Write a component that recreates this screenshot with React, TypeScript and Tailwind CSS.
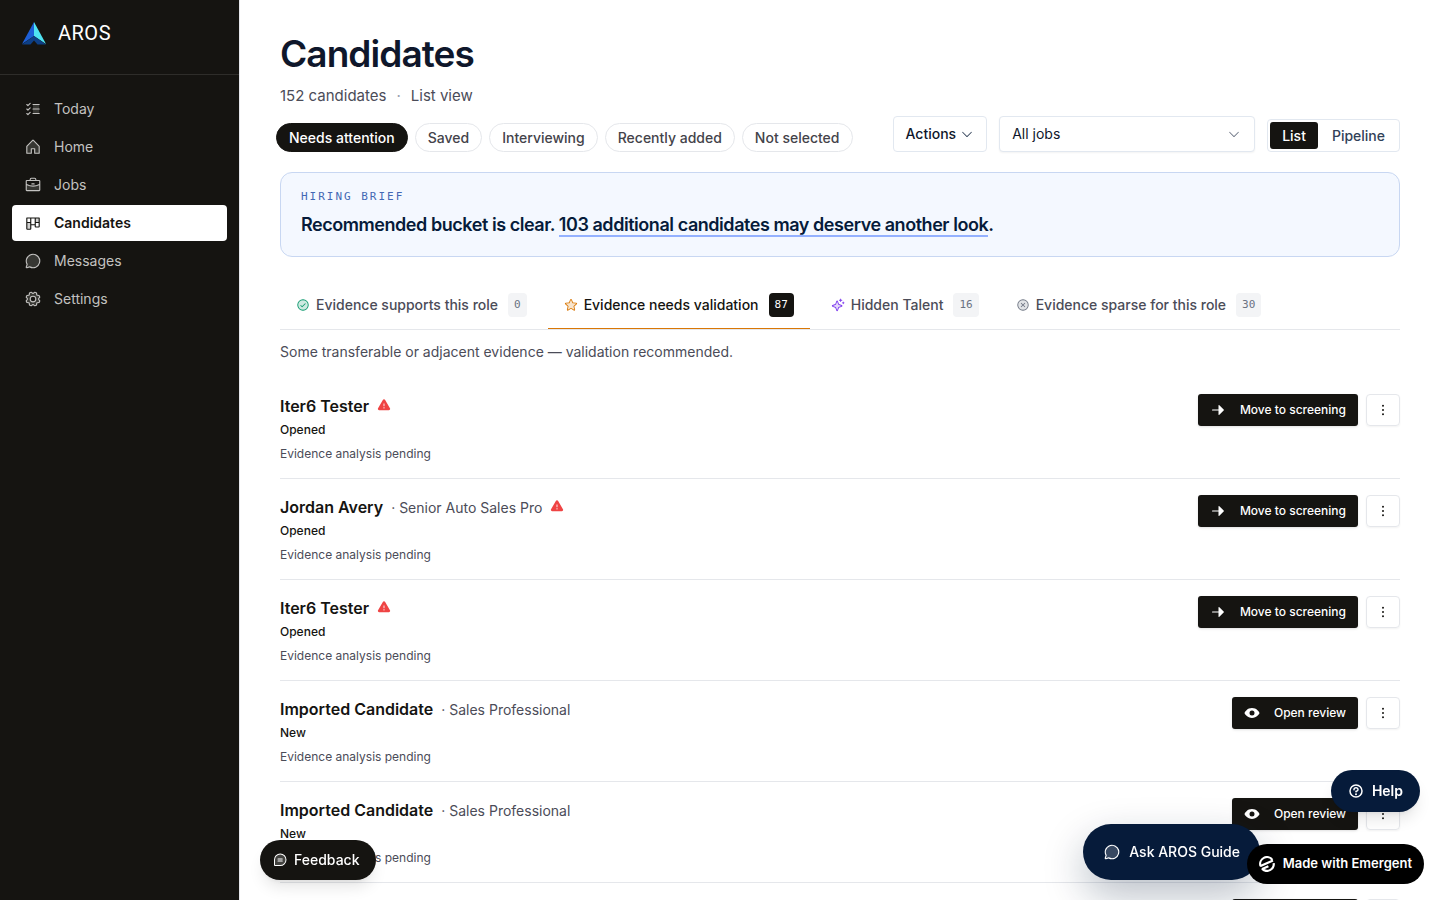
import React from 'react'
import type { IconType } from 'react-icons'
import {
  PiArrowRightFill,
  PiBriefcaseDuotone,
  PiCaretDown,
  PiChatCircleDuotone,
  PiChatTeardropTextDuotone,
  PiCheckCircleDuotone,
  PiDotsThreeVerticalBold,
  PiEyeFill,
  PiGearDuotone,
  PiHouseDuotone,
  PiKanbanDuotone,
  PiListChecksDuotone,
  PiQuestionBold,
  PiSparkleDuotone,
  PiStarDuotone,
  PiWarningFill,
  PiXCircleDuotone,
} from 'react-icons/pi'
import clsx from 'clsx'

interface NavItem {
  label: string
  icon: IconType
  active?: boolean
}

interface Tab {
  label: string
  count: number
  icon: IconType
  iconClass: string
  active?: boolean
}

interface Candidate {
  id: number
  name: string
  role?: string
  flagged?: boolean
  status: 'Opened' | 'New'
}

const NAV_ITEMS: NavItem[] = [
  { label: 'Today', icon: PiListChecksDuotone },
  { label: 'Home', icon: PiHouseDuotone },
  { label: 'Jobs', icon: PiBriefcaseDuotone },
  { label: 'Candidates', icon: PiKanbanDuotone, active: true },
  { label: 'Messages', icon: PiChatCircleDuotone },
  { label: 'Settings', icon: PiGearDuotone },
]

const FILTERS = ['Needs attention', 'Saved', 'Interviewing', 'Recently added', 'Not selected']

const TABS: Tab[] = [
  { label: 'Evidence supports this role', count: 0, icon: PiCheckCircleDuotone, iconClass: 'text-[#059669]' },
  { label: 'Evidence needs validation', count: 87, icon: PiStarDuotone, iconClass: 'text-[#d97706]', active: true },
  { label: 'Hidden Talent', count: 16, icon: PiSparkleDuotone, iconClass: 'text-[#7c3aed]' },
  { label: 'Evidence sparse for this role', count: 30, icon: PiXCircleDuotone, iconClass: 'text-[#6b7280]' },
]

const CANDIDATES: Candidate[] = [
  { id: 1, name: 'Iter6 Tester', flagged: true, status: 'Opened' },
  { id: 2, name: 'Jordan Avery', role: 'Senior Auto Sales Pro', flagged: true, status: 'Opened' },
  { id: 3, name: 'Iter6 Tester', flagged: true, status: 'Opened' },
  { id: 4, name: 'Imported Candidate', role: 'Sales Professional', status: 'New' },
  { id: 5, name: 'Imported Candidate', role: 'Sales Professional', status: 'New' },
  { id: 6, name: 'Imported Candidate', role: 'Sales Professional', status: 'New' },
]

function Logo() {
  return (
    <svg viewBox="0 0 24 24" className="h-6 w-6" aria-hidden="true">
      <path d="M12 1 0 23l12-8z" fill="#1d5fd6" />
      <path d="M12 1v14l12 8z" fill="#4fe3f2" />
      <path d="M12 15 0 23.4h8.5L12 19.6l3.5 3.8H24z" fill="#0d3f86" />
    </svg>
  )
}

function EmergentMark() {
  return (
    <svg viewBox="0 0 16 16" className="h-4 w-4" fill="none" stroke="currentColor" strokeWidth="2.2" aria-hidden="true">
      <path d="M13.4 3.8A6.8 6.8 0 0 0 1.5 10L14 4.6" strokeLinejoin="bevel" />
      <path d="M14.7 7.2A6.8 6.8 0 0 1 3.2 12.9L9.4 10.2" strokeLinejoin="bevel" />
    </svg>
  )
}

function Sidebar() {
  return (
    <aside className="w-60 shrink-0 border-r border-gray-200 bg-[#151411] text-[#c3c2c0]">
      <div className="flex h-[75px] items-start gap-3 border-b border-[#2e2d2a] px-[22px] pt-[21px]">
        <Logo />
        <span className="font-['Roboto',sans-serif] text-xl leading-6 tracking-wide text-white">AROS</span>
      </div>
      <nav className="flex flex-col gap-0.5 px-3 py-4">
        {NAV_ITEMS.map(({ label, icon: Icon, active }) => (
          <a
            key={label}
            href="#"
            aria-current={active ? 'page' : undefined}
            className={clsx(
              'flex h-9 items-center gap-3 rounded px-3 text-sm',
              active && 'bg-white font-semibold text-[#151411]'
            )}
          >
            <Icon className="h-[18px] w-[18px]" />
            {label}
          </a>
        ))}
      </nav>
    </aside>
  )
}

function Toolbar() {
  return (
    <div className="mt-2 flex items-end justify-between">
      <div className="-ml-1 flex gap-[7px]">
        {FILTERS.map((filter, i) => (
          <button
            key={filter}
            className={clsx(
              'h-[29px] rounded-full border px-3 text-sm leading-5 font-medium',
              i === 0 ? 'border-[#151411] bg-[#151411] text-white' : 'border-gray-200 text-[#44434a]'
            )}
          >
            {filter}
          </button>
        ))}
      </div>

      <div className="flex items-end gap-3">
        <button className="flex h-9 items-center gap-1 rounded border border-slate-200 px-3 text-sm font-medium text-slate-900">
          Actions
          <PiCaretDown className="h-3.5 w-3.5 text-slate-700" />
        </button>
        <div className="relative">
          <select
            aria-label="Filter by job"
            className="h-9 w-64 appearance-none rounded border border-slate-200 bg-white px-3 text-sm text-slate-900 shadow-xs"
          >
            <option>All jobs</option>
          </select>
          <PiCaretDown className="pointer-events-none absolute top-[11px] right-3.5 h-3.5 w-3.5 text-gray-500" />
        </div>
        <div className="flex gap-0.5 rounded border border-slate-200 p-0.5 text-sm font-medium">
          <button className="h-[27px] rounded-[3px] bg-[#151411] px-3 text-white">List</button>
          <button className="h-[27px] px-3 text-slate-700">Pipeline</button>
        </div>
      </div>
    </div>
  )
}

function HiringBrief() {
  return (
    <section className="mt-5 rounded-xl border border-[#c8d7f2] bg-[#f4f8ff] px-5 pt-4 pb-[19px]">
      <p className="font-['DejaVu_Sans_Mono',monospace] text-[11px] leading-4 font-medium tracking-[0.18em] text-[#4468b4]">
        HIRING BRIEF
      </p>
      <h2 className="mt-2 text-lg leading-6 font-semibold tracking-tight text-[#061b3a]">
        Recommended bucket is clear.{' '}
        <a href="#" className="border-b-2 border-[#94b1ff]">
          103 additional candidates may deserve another look
        </a>
        .
      </h2>
    </section>
  )
}

function EvidenceTabs() {
  return (
    <div role="tablist" className="mt-6 flex gap-[5px] border-b border-gray-200">
      {TABS.map(({ label, count, icon: Icon, iconClass, active }) => (
        <button
          key={label}
          role="tab"
          aria-selected={!!active}
          className={clsx(
            'flex h-12 items-center border-b px-4 text-sm font-medium',
            active ? 'border-[#d97706] text-[#151411]' : 'border-transparent text-[#4b4c58]'
          )}
        >
          <Icon className={clsx('mr-1.5 h-3.5 w-3.5', iconClass)} />
          {label}
          <span
            className={clsx(
              "ml-2.5 flex h-6 items-center rounded px-1.5 font-['DejaVu_Sans_Mono',monospace] text-[11px]",
              active ? 'bg-[#151411] text-white' : 'bg-gray-100 text-gray-500'
            )}
          >
            {count}
          </span>
        </button>
      ))}
    </div>
  )
}

function CandidateRow({ candidate }: { candidate: Candidate }) {
  const isNew = candidate.status === 'New'
  const ActionIcon = isNew ? PiEyeFill : PiArrowRightFill

  return (
    <li className="flex items-start justify-between border-b border-gray-200 py-4">
      <div>
        <div className="flex h-6 items-baseline gap-2">
          <h3 className="text-base font-semibold text-[#151411]">{candidate.name}</h3>
          {candidate.role && <span className="text-sm text-[#4b4c58]">· {candidate.role}</span>}
          {candidate.flagged && <PiWarningFill className="h-3.5 w-3.5 text-[#ef4444]" />}
        </div>
        <p className="mt-1 text-xs font-medium text-[#151411]">{candidate.status}</p>
        <p className="mt-2 text-xs text-[#4b4c58]">Evidence analysis pending</p>
      </div>

      <div className="flex gap-2">
        <button className="flex h-8 items-center gap-3.5 rounded-[3px] bg-[#151411] px-3 text-xs font-medium text-white shadow-sm">
          <ActionIcon className="h-4 w-4" />
          {isNew ? 'Open review' : 'Move to screening'}
        </button>
        <button
          aria-label="More actions"
          className="flex h-8 w-[34px] items-center justify-center rounded border border-gray-200 text-[#151411] shadow-xs"
        >
          <PiDotsThreeVerticalBold className="h-4 w-4" />
        </button>
      </div>
    </li>
  )
}

function FloatingButtons() {
  return (
    <>
      <button className="fixed bottom-5 left-65 flex h-10 items-center gap-1.5 rounded-full bg-[#151411] px-3 pr-4 text-sm font-medium text-white shadow-lg">
        <PiChatTeardropTextDuotone className="h-4 w-4" />
        Feedback
      </button>
      <button className="fixed right-45 bottom-5 flex h-14 items-center gap-2 rounded-full bg-[#061b3a] px-5 text-sm font-medium text-white shadow-[0_16px_40px_rgba(6,27,58,0.28)]">
        <PiChatCircleDuotone className="h-[18px] w-[18px]" />
        Ask AROS Guide
      </button>
      <button className="fixed right-5 bottom-22 flex h-[42px] items-center gap-2 rounded-full bg-[#061b3a] px-[17px] text-sm font-semibold text-white shadow-lg">
        <PiQuestionBold className="h-4 w-4" />
        Help
      </button>
      <a
        href="#"
        className="fixed right-4 bottom-4 flex h-10 items-center gap-2 rounded-full bg-black px-3 text-[13px] font-semibold text-white"
      >
        <EmergentMark />
        Made with Emergent
      </a>
    </>
  )
}

export default function App() {
  return (
    <div className="flex h-screen overflow-hidden bg-white font-['Inter',sans-serif]">
      <Sidebar />
      <main className="min-w-0 flex-1 overflow-y-auto px-10 pt-8">
        <h1 className="text-[37px] leading-11 font-semibold tracking-tight text-slate-900">Candidates</h1>
        <p className="mt-2 flex gap-2.5 text-[15px] leading-6 text-[#4b4c58]">
          <span>152 candidates</span>
          <span className="text-gray-400">·</span>
          <span>List view</span>
        </p>
        <Toolbar />
        <HiringBrief />
        <EvidenceTabs />
        <p className="mt-3 text-sm text-[#4b4c58]">Some transferable or adjacent evidence — validation recommended.</p>
        <ul className="mt-4">
          {CANDIDATES.map((candidate) => (
            <CandidateRow key={candidate.id} candidate={candidate} />
          ))}
        </ul>
      </main>
      <FloatingButtons />
    </div>
  )
}
